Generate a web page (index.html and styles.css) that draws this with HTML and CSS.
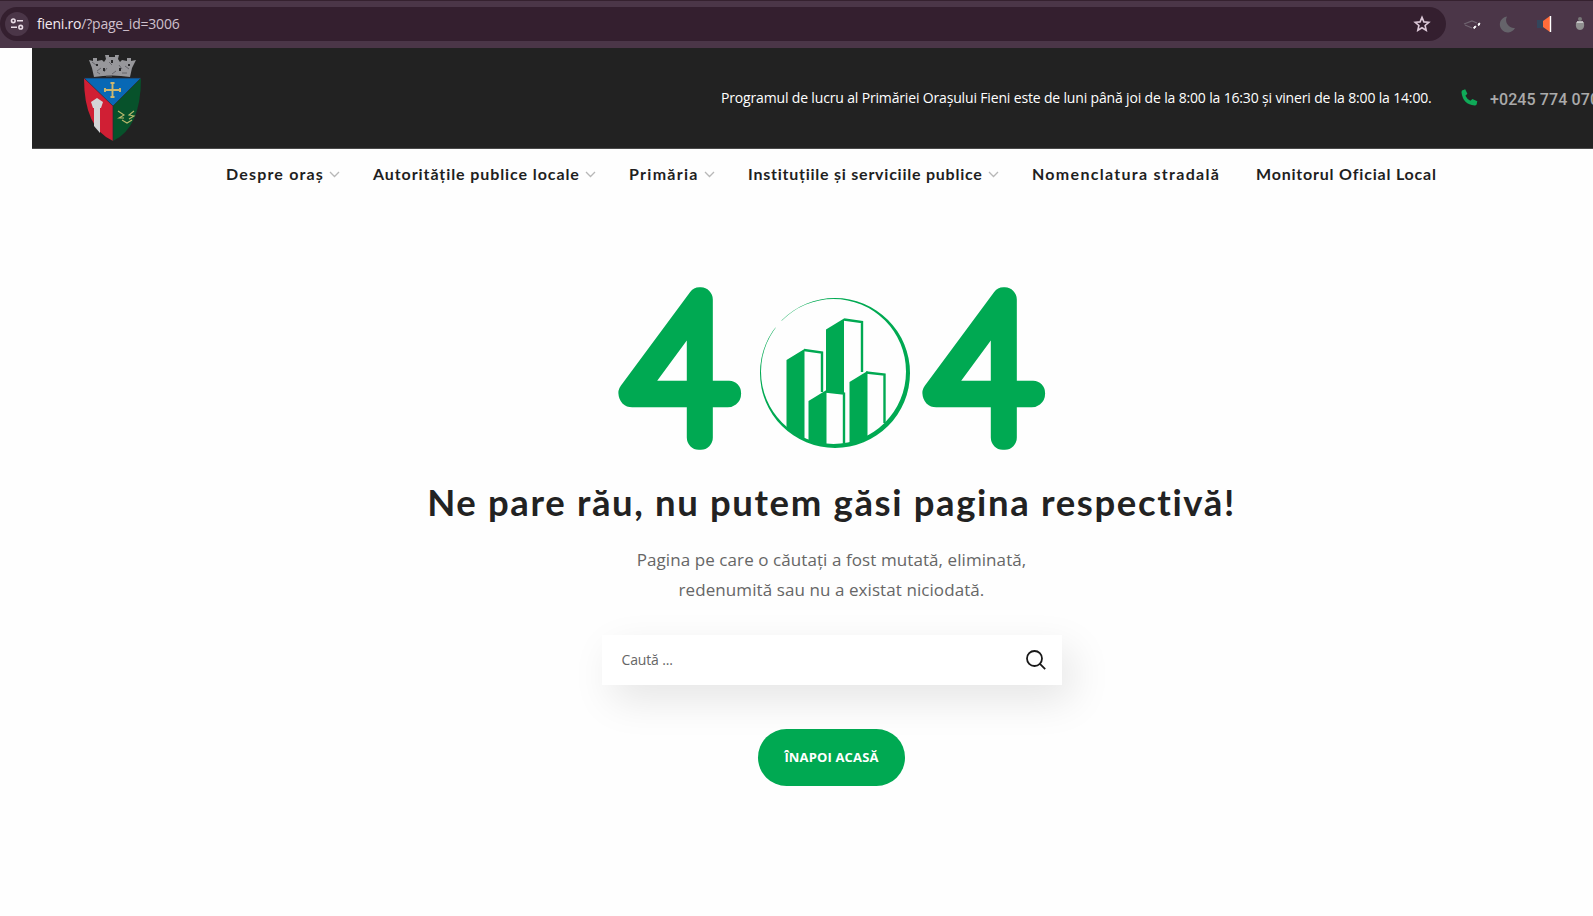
FILE: index.html
```
<!DOCTYPE html>
<html lang="ro">
<head>
<meta charset="utf-8">
<title>Pagina nu a fost găsită</title>
<link rel="stylesheet" href="styles.css">
</head>
<body>
<div class="browser">
  <div class="address">
    <span class="site-info"><svg width="24" height="24" viewBox="0 0 24 24" fill="none" stroke="#e9dce6" stroke-width="1.6"><circle cx="8.3" cy="8.8" r="1.8"/><path d="M12 8.8h6M6 15.2h6"/><circle cx="15.7" cy="15.2" r="1.8"/></svg></span>
    <span class="url"><b>fieni.ro</b>/?page_id=3006</span>
    <svg class="star" width="18" height="18" viewBox="0 0 18 18" fill="none" stroke="#dcc8d8" stroke-width="1.6"><path d="M9 2.400l1.900 4.500 4.900.4-3.700 3.200 1.100 4.800L9 12.800l-4.200 2.500 1.100-4.800L2.200 7.300l4.900-.4z"/></svg>
  </div>
  <svg class="extensions" width="148" height="48" viewBox="1445 0 148 48">
    <path d="M1464 24l8-3 5 2M1465 25l7 3" stroke="#6f6470" stroke-width="1.300" fill="none"/>
    <path d="M1473.500 28l1.500-2 1 .5-1.500 2zM1478 25l1-2 1 .5-1 2z" fill="#fff" stroke="#fff"/>
    <path d="M1507 16.500a8 8 0 1 0 8 11.500a8 8 0 0 1-8-11.500z" fill="#65636a"/>
    <rect x="1537" y="20" width="7" height="8" fill="#33465c"/><path d="M1543 21l7-5v16l-7-5z" fill="#ff6c3a"/><path d="M1550.500 16v16" stroke="#fff" stroke-width="1.400"/>
    <circle cx="1580" cy="19" r="2" fill="#777"/><path d="M1576 22h8q1 8-4 8t-4-8z" fill="#8f8f8f"/><path d="M1577 22h6" stroke="#ddd" stroke-width="1.500"/>
  </svg>
</div>
<header class="topbar">
  <svg class="crest" width="60" height="90" viewBox="82 53 60 90">
    <path d="M89 60l4 1v-3h4v3l5-1 2 2 2-3-1-4h4v2h6v-2h4l-1 4 2 3 2-2 5 1v-3h4v3l5-1-4 8-2 9q-18-3-36 0l-2-9z" fill="#97979b"/>
    <path d="M92 62l4 3m1 6l4-3m3 4l3-4m5 6l4-3m3-6l3 4m3-3l4 3m-32 3l3 2m9-12l3 3m-6 11h6m10-3h5" stroke="#66666b" stroke-width="1"/>
    <path d="M104 68v3M112 60v3M120 68v3M97 64v2M129 64v2" stroke="#2a2a2c" stroke-width="2"/>
    <path d="M84 78h29v63Q84 128 84 78z" fill="#d01f34"/>
    <path d="M113 78h28q0 50-28 63z" fill="#07522b"/>
    <path d="M84 78h57l-28 28z" fill="#0868b5"/>
    <path d="M84 78h57l-28 28zM113 106v35" fill="none" stroke="#292a35" stroke-width=".7"/>
    <path d="M112.500 82v16M104 90h17M110.500 83h4M110.500 97h4M105 88v4M120 88v4" stroke="#cdb66e" stroke-width="1.900"/>
    <path d="M94 106h6v27l-6-7z" fill="#d4d4d6"/><path d="M91 102l6-4 6 4-2 6h-8z" fill="#d4d4d6"/>
    <path d="M118 111l6 4-5 3 5 0M134 111l-5 4 5 1-5 3M122 120l5 3 5-3" fill="none" stroke="#b9b86d" stroke-width="1.100"/>
  </svg>
  <p class="hours"><span>Programul de lucru al Primăriei Orașului Fieni este de luni până joi de la 8:00 la 16:30 și vineri de la 8:00 la 14:00.</span></p>
  <svg class="phone-icon" width="17" height="17" viewBox="0 0 17 17"><path d="M1 1.500L4.200.3l2.200 4.500-2 2q1.700 3.500 5 5l2-1.900 4.900 2.300-.7 3.200q-.5 1-2 1.100Q2 15.500.5 3.500q0-1.200.5-2z" fill="#0faa58"/></svg>
  <span class="phone">+0245 774 070</span>
</header>
<nav class="menu">
  <a class="m1"><span>Despre oraș</span><svg width="11" height="7" viewBox="0 0 11 7"><path d="M1 1l4.500 4.500L10 1"/></svg></a>
  <a class="m2"><span>Autoritățile publice locale</span><svg width="11" height="7" viewBox="0 0 11 7"><path d="M1 1l4.500 4.500L10 1"/></svg></a>
  <a class="m3"><span>Primăria</span><svg width="11" height="7" viewBox="0 0 11 7"><path d="M1 1l4.500 4.500L10 1"/></svg></a>
  <a class="m4"><span>Instituțiile și serviciile publice</span><svg width="11" height="7" viewBox="0 0 11 7"><path d="M1 1l4.500 4.500L10 1"/></svg></a>
  <a class="m5"><span>Nomenclatura stradală</span></a>
  <a class="m6"><span>Monitorul Oficial Local</span></a>
</nav>
<main class="not-found">
  <svg class="code" width="460" height="190" viewBox="600 275 460 190">
    <defs><clipPath id="disc"><circle cx="835" cy="373" r="74"/></clipPath></defs>
    <g class="digit"><text transform="translate(625 438) scale(.975 1)">4</text><text transform="translate(929 438) scale(.975 1)">4</text></g>
    <path fill-rule="evenodd" fill="#00a952" d="M760 373a75 75 0 1 0 150 0a75 75 0 1 0-150 0zM761 371.500a72.500 72.500 0 1 1 145 0a72.500 72.500 0 1 1-145 0z"/>
    <path d="M776 328l6-7" stroke="#fefefe" stroke-width="4"/>
    <g clip-path="url(#disc)">
      <g fill="#00a952">
        <path d="M786.500 360l18-11v89l6 4v8h-24z"/><path d="M826 329.500l18-11V394l-18-2z"/>
        <path d="M808.500 401l18-11v60h-18z"/><path d="M849.500 382l18-11v79h-18z"/>
      </g>
      <path d="M804 350l18 2.500V392M844 319.500l18 2.500v50M826 391.500l18 2v50M866 372.500l18.500 2V423" fill="none" stroke="#00a952" stroke-width="2.400"/>
    </g>
  </svg>
  <h1><span>Ne pare rău, nu putem găsi pagina respectivă!</span></h1>
  <p class="lead"><span>Pagina pe care o căutați a fost mutată, eliminată,</span><br><span>redenumită sau nu a existat niciodată.</span></p>
  <div class="search"><span>Caută ...</span><svg width="20" height="20" viewBox="0 0 20 20" fill="none" stroke="#181818" stroke-width="1.800"><circle cx="8.500" cy="8.500" r="7.500"/><path d="M13.700 13.700l5.500 5.500"/></svg></div>
  <a class="home"><span>ÎNAPOI ACASĂ</span></a>
</main>
</body>
</html>
```
FILE: styles.css
```
* { box-sizing: border-box; }
body { margin: 0; width: 1593px; height: 916px; overflow: hidden; background: #fefefe; font-family: "Open Sans", sans-serif; color: #222; }
h1, p { margin: 0; font-weight: inherit; }
svg { flex: none; display: block; }
span { white-space: nowrap; }
.browser { height: 48px; padding-bottom: 1px; display: flex; align-items: center; background: #4b3648; border-top: 1px solid #35212f; }
.address { width: 1446px; height: 34px; display: flex; align-items: center; background: #341f2f; border-radius: 17px; padding: 0 15px 0 5px; }
.site-info { width: 24px; height: 24px; border-radius: 50%; background: #4b3648; }
.url { margin-left: 8px; padding-bottom: 1px; font-size: 14px; color: #cfc0cc; letter-spacing: -.22px; flex: 1; }
.url b { font-weight: 400; color: #f3eaf1; }
.extensions { margin-left: -1px; }
.topbar { margin-left: 32px; height: 101px; display: flex; align-items: center; background: #222; border-bottom: 1px solid #4a4a4a; overflow: hidden; }
.crest { margin-left: 50px; }
.hours { flex: none; margin-left: 579px; width: 740px; padding-bottom: 2px; font-size: 14px; letter-spacing: -.16px; color: #fff; }
.phone-icon { margin-bottom: 2px; }
.phone { margin-left: 12px; padding-top: 2px; font: 500 16px Roboto, sans-serif; letter-spacing: .1px; color: #aaa; }
.menu { height: 50px; padding: 0 0 2px 226px; display: flex; align-items: center; font: 700 16px Lato, sans-serif; font-variant-ligatures: none; color: #1f1f1f; }
.menu a { display: flex; align-items: center; justify-content: flex-start; gap: 5px; }
.menu svg { margin-top: 3px; }
.menu path { fill: none; stroke: #b8b8b8; stroke-width: 1.3; }
.m1 { width: 147px; letter-spacing: 1.18px; }
.m2 { width: 256px; letter-spacing: .91px; }
.m3 { width: 119px; letter-spacing: 1.28px; }
.m4 { width: 284px; letter-spacing: .76px; }
.m5 { width: 224px; letter-spacing: 1.29px; }
.m6 { letter-spacing: .8px; }
.not-found { margin-left: 32px; padding-top: 76px; width: 1599px; display: flex; flex-direction: column; align-items: center; }
.code { margin-right: 3px; overflow: visible; }
.digit text { font: 100 196px Lato, sans-serif; fill: #00a952; stroke: #00a952; stroke-width: 24.5px; stroke-linejoin: round; }
h1 { font: 700 36.5px/48px Lato, sans-serif; font-variant-ligatures: none; letter-spacing: 1.64px; margin-top: 13px; }
.lead { margin-top: 19px; font-size: 17px; line-height: 30px; letter-spacing: .08px; text-align: center; color: #666; }
.search { margin-top: 30px; width: 460px; height: 50px; padding: 0 16px 1px 20px; display: flex; align-items: center; justify-content: space-between; background: #fff; font-size: 14px; letter-spacing: -.15px; color: #666; box-shadow: 10px 15px 40px rgba(0,0,0,.1); }
.home { margin-top: 44px; width: 147px; height: 57px; padding-bottom: 2px; border-radius: 29px; background: #00a952; color: #fff; font-size: 13px; font-weight: 700; letter-spacing: .15px; display: flex; align-items: center; justify-content: center; }
```
